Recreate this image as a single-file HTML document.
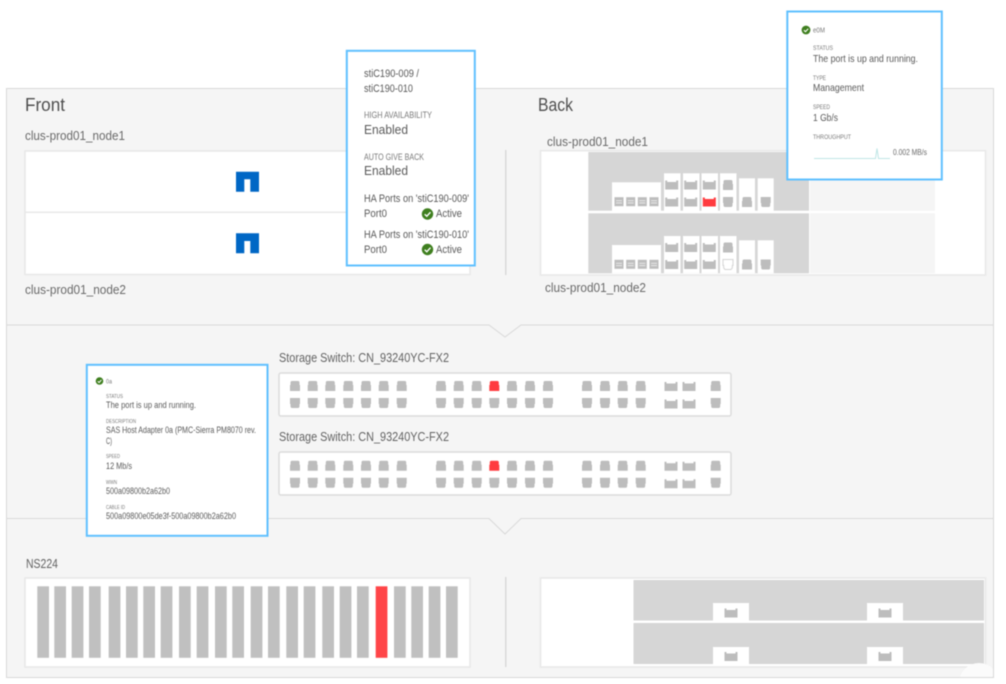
<!DOCTYPE html>
<html><head><meta charset="utf-8"><style>
html,body{margin:0;padding:0;background:#fff;width:1006px;height:684px;overflow:hidden}
svg{display:block;filter:blur(.5px)}
text{font-family:"Liberation Sans",sans-serif;fill:#5a5a5a}
</style></head><body>
<svg width="1006" height="684" viewBox="0 0 1006 684" xmlns="http://www.w3.org/2000/svg">
<defs>
<path id="u" fill="#bdbdbd" d="M-3-5H3Q4.500-5 4.500-3.300V-1H5V5H-5V-1H-4.500V-3.300Q-4.500-5-3-5Z"/>
<path id="d" fill="#bdbdbd" d="M-5-5H5V1H4.500V3Q4.500 5 3 5H-3Q-4.500 5-4.500 3V1H-5Z"/>
<path id="ur" fill="#ff3b3f" d="M-3-5H3Q4.500-5 4.500-3.300V-1H5V5H-5V-1H-4.500V-3.300Q-4.500-5-3-5Z"/>
<path id="w" fill="#bdbdbd" d="M-6.500-4.500H-4.500V-3H4.500V-4.500H6.500V4.500H-6.500Z"/>
<path id="wr" fill="#ff3b3f" d="M-6.500-4.500H-4.500V-3H4.500V-4.500H6.500V4.500H-6.500Z"/>
<g id="sq"><rect x="-4.500" y="-4.500" width="9" height="9" fill="#bdbdbd"/><rect x="-3" y="-1.500" width="6" height="1" fill="#e8e8e8"/><rect x="-3" y=".8" width="6" height="1" fill="#e8e8e8"/></g>
<g id="sw">
<use href="#u" x="295" y="0"/><use href="#u" x="312.700" y="0"/><use href="#u" x="330.300" y="0"/><use href="#u" x="348.300" y="0"/><use href="#u" x="366" y="0"/><use href="#u" x="383.700" y="0"/><use href="#u" x="401.700" y="0"/>
<use href="#u" x="441" y="0"/><use href="#u" x="458.700" y="0"/><use href="#u" x="476.700" y="0"/><use href="#ur" x="494.300" y="0"/><use href="#u" x="512" y="0"/><use href="#u" x="530" y="0"/><use href="#u" x="548" y="0"/>
<use href="#u" x="587" y="0"/><use href="#u" x="605" y="0"/><use href="#u" x="622.700" y="0"/><use href="#u" x="640.700" y="0"/><use href="#w" x="671" y="0.500"/><use href="#w" x="689" y="0.500"/><use href="#u" x="715.700" y="0"/>
<use href="#d" x="295" y="17"/><use href="#d" x="312.700" y="17"/><use href="#d" x="330.300" y="17"/><use href="#d" x="348.300" y="17"/><use href="#d" x="366" y="17"/><use href="#d" x="383.700" y="17"/><use href="#d" x="401.700" y="17"/>
<use href="#d" x="441" y="17"/><use href="#d" x="458.700" y="17"/><use href="#d" x="476.700" y="17"/><use href="#d" x="494.300" y="17"/><use href="#d" x="512" y="17"/><use href="#d" x="530" y="17"/><use href="#d" x="548" y="17"/>
<use href="#d" x="587" y="17"/><use href="#d" x="605" y="17"/><use href="#d" x="622.700" y="17"/><use href="#d" x="640.700" y="17"/><use href="#w" x="671" y="18"/><use href="#w" x="689" y="18"/><use href="#d" x="715.700" y="17"/>
</g>
<clipPath id="pc"><rect x="6" y="88" width="987" height="589"/></clipPath>
</defs>

<!-- panel -->
<rect x="6.500" y="88.500" width="987" height="589" fill="#f5f5f5" stroke="#d9d9d9"/>
<polyline points="6,325 489,325 505,337 521,325 993,325" fill="none" stroke="#d9d9d9" stroke-width="1"/>
<polyline points="6,518.500 489,518.500 505,534 521,518.500 993,518.500" fill="none" stroke="#d9d9d9" stroke-width="1"/>

<!-- Front/Back headings -->
<text x="25" y="111" font-size="18.500" textLength="40" lengthAdjust="spacingAndGlyphs" style="fill:#4f4f4f">Front</text>
<text x="538" y="111" font-size="18.500" textLength="35" lengthAdjust="spacingAndGlyphs" style="fill:#4f4f4f">Back</text>
<text x="25" y="140" font-size="13" textLength="100" lengthAdjust="spacingAndGlyphs" style="fill:#6a6a6a">clus-prod01_node1</text>
<text x="25" y="294" font-size="13" textLength="101" lengthAdjust="spacingAndGlyphs" style="fill:#6a6a6a">clus-prod01_node2</text>
<text x="547" y="146" font-size="13" textLength="101" lengthAdjust="spacingAndGlyphs" style="fill:#6a6a6a">clus-prod01_node1</text>
<text x="545" y="292" font-size="13" textLength="101" lengthAdjust="spacingAndGlyphs" style="fill:#6a6a6a">clus-prod01_node2</text>

<!-- Front box -->
<rect x="25" y="151" width="445" height="123.500" fill="#fff" stroke="#e8e8e8" stroke-width="1.500"/>
<rect x="25" y="211.500" width="445" height="1.500" fill="#e8e8e8"/>
<path fill="#0067c5" d="M236 171.700H259V191.700H250.300V179.300H244.300V191.700H236Z"/>
<path fill="#0067c5" d="M236 233.300H259V253.300H250.300V241H244.300V253.300H236Z"/>

<rect x="505" y="150" width="1.500" height="125" fill="#d9d9d9"/>

<!-- Back box -->
<rect x="540.500" y="150.700" width="445" height="124.300" fill="#fff" stroke="#e8e8e8" stroke-width="1.500"/>
<rect x="588.300" y="152" width="220.700" height="58.700" fill="#d6d6d6"/>
<rect x="588.300" y="213.300" width="220.700" height="60" fill="#d6d6d6"/>
<rect x="810" y="152" width="125" height="58.700" fill="#f5f5f5"/>
<rect x="810" y="213.300" width="125" height="60" fill="#f5f5f5"/>
<g fill="#fff">
<rect x="612" y="182.300" width="49" height="28.700"/>
<rect x="664" y="173.300" width="16.500" height="37.700"/>
<rect x="683" y="173.300" width="16.500" height="37.700"/>
<rect x="701.500" y="173.300" width="16.500" height="37.700"/>
<rect x="720" y="173.300" width="16.500" height="37.700"/>
<rect x="739" y="178.300" width="16" height="32.700"/>
<rect x="757.700" y="178.300" width="16" height="32.700"/>
<rect x="612" y="245" width="49" height="28.300"/>
<rect x="664" y="236" width="16.500" height="37.300"/>
<rect x="683" y="236" width="16.500" height="37.300"/>
<rect x="701.500" y="236" width="16.500" height="37.300"/>
<rect x="720" y="236" width="16.500" height="37.300"/>
<rect x="739" y="240.300" width="16" height="33"/>
<rect x="757.700" y="240.300" width="16" height="33"/>
</g>
<use href="#sq" x="619" y="201.700"/><use href="#sq" x="630.700" y="201.700"/><use href="#sq" x="642.300" y="201.700"/><use href="#sq" x="654" y="201.700"/>
<use href="#w" x="671.700" y="185"/><use href="#w" x="690.700" y="185"/><use href="#w" x="709.300" y="185"/><use href="#u" x="728" y="185"/>
<use href="#w" x="671.700" y="202"/><use href="#w" x="690.700" y="202"/><use href="#wr" x="709.300" y="202"/><use href="#d" x="728" y="202"/>
<use href="#u" x="747" y="202"/><use href="#d" x="765.700" y="202"/>
<use href="#sq" x="619" y="264.300"/><use href="#sq" x="630.700" y="264.300"/><use href="#sq" x="642.300" y="264.300"/><use href="#sq" x="654" y="264.300"/>
<use href="#w" x="671.700" y="247.500"/><use href="#w" x="690.700" y="247.500"/><use href="#w" x="709.300" y="247.500"/><use href="#u" x="728" y="247.500"/>
<use href="#w" x="671.700" y="264.500"/><use href="#w" x="690.700" y="264.500"/><use href="#w" x="709.300" y="264.500"/>
<path fill="#fff" stroke="#d4d4d4" d="M723 259.500H733V265.500H732.300V268L731 269.500H725L723.700 268V265.500H723Z"/>
<use href="#u" x="747" y="264.500"/><use href="#d" x="765.700" y="264.500"/>

<!-- Switches -->
<text x="279" y="362" font-size="13" textLength="170" lengthAdjust="spacingAndGlyphs" style="fill:#636363">Storage Switch: CN_93240YC-FX2</text>
<rect x="279" y="373" width="452" height="43" rx="2" fill="#fff" stroke="#dcdcdc" stroke-width="1.500"/>
<use href="#sw" y="386"/>
<text x="279" y="441" font-size="13" textLength="170" lengthAdjust="spacingAndGlyphs" style="fill:#636363">Storage Switch: CN_93240YC-FX2</text>
<rect x="279" y="452" width="452" height="43" rx="2" fill="#fff" stroke="#dcdcdc" stroke-width="1.500"/>
<use href="#sw" y="465.700"/>

<!-- NS224 -->
<text x="26" y="568" font-size="12.500" textLength="32" lengthAdjust="spacingAndGlyphs" style="fill:#636363">NS224</text>
<rect x="25" y="578" width="445" height="89" fill="#fff" stroke="#e8e8e8" stroke-width="1.500"/>
<g fill="#c0c0c0">
<rect x="37.300" y="586.300" width="11.700" height="71.500"/><rect x="54.300" y="586.300" width="11.700" height="71.500"/><rect x="71.700" y="586.300" width="11.700" height="71.500"/><rect x="89" y="586.300" width="11.700" height="71.500"/>
<rect x="108.700" y="586.300" width="11.700" height="71.500"/><rect x="126" y="586.300" width="11.700" height="71.500"/><rect x="143.300" y="586.300" width="11.700" height="71.500"/><rect x="160.700" y="586.300" width="11.700" height="71.500"/>
<rect x="179" y="586.300" width="11.700" height="71.500"/><rect x="196.700" y="586.300" width="11.700" height="71.500"/><rect x="215" y="586.300" width="11.700" height="71.500"/><rect x="232.300" y="586.300" width="11.700" height="71.500"/>
<rect x="250.700" y="586.300" width="11.700" height="71.500"/><rect x="268" y="586.300" width="11.700" height="71.500"/><rect x="286.300" y="586.300" width="11.700" height="71.500"/><rect x="303.700" y="586.300" width="11.700" height="71.500"/>
<rect x="322.300" y="586.300" width="11.700" height="71.500"/><rect x="339.700" y="586.300" width="11.700" height="71.500"/><rect x="357" y="586.300" width="11.700" height="71.500"/>
<rect x="375.700" y="586.300" width="11.700" height="71.500" fill="#ff4548"/>
<rect x="394" y="586.300" width="11.700" height="71.500"/><rect x="411.300" y="586.300" width="11.700" height="71.500"/><rect x="428.700" y="586.300" width="11.700" height="71.500"/><rect x="446" y="586.300" width="11.700" height="71.500"/>
</g>
<rect x="505" y="577" width="1.500" height="90" fill="#d9d9d9"/>
<rect x="540.500" y="578" width="445" height="89" fill="#fff" stroke="#e8e8e8" stroke-width="1.500"/>
<rect x="633.500" y="580" width="350.500" height="40.500" fill="#d6d6d6"/>
<rect x="633.500" y="623" width="350.500" height="41" fill="#d6d6d6"/>
<g fill="#fff">
<rect x="713" y="603" width="36" height="18"/><rect x="867" y="603" width="36" height="18"/>
<rect x="713" y="647" width="36" height="18"/><rect x="867" y="647" width="36" height="18"/>
</g>
<use href="#w" x="731" y="613"/><use href="#w" x="885" y="613"/><use href="#w" x="731" y="656.500"/><use href="#w" x="885" y="656.500"/>
<circle cx="979" cy="683" r="20" fill="#fbfbfb" clip-path="url(#pc)"/>

<!-- Tooltip 1 -->
<rect x="346.800" y="50.800" width="128" height="214.700" fill="#fff" stroke="#5fc0ff" stroke-width="2"/>
<text x="364" y="77" font-size="11" textLength="55" lengthAdjust="spacingAndGlyphs">stiC190-009 /</text>
<text x="364" y="92" font-size="11" textLength="49" lengthAdjust="spacingAndGlyphs">stiC190-010</text>
<text x="364" y="118" font-size="9" textLength="68" lengthAdjust="spacingAndGlyphs" style="fill:#7a7a7a">HIGH AVAILABILITY</text>
<text x="364" y="134" font-size="13" textLength="44" lengthAdjust="spacingAndGlyphs">Enabled</text>
<text x="364" y="160" font-size="9" textLength="60" lengthAdjust="spacingAndGlyphs" style="fill:#7a7a7a">AUTO GIVE BACK</text>
<text x="364" y="175" font-size="13" textLength="44" lengthAdjust="spacingAndGlyphs">Enabled</text>
<text x="364" y="202" font-size="11" textLength="105" lengthAdjust="spacingAndGlyphs">HA Ports on 'stiC190-009'</text>
<text x="364" y="217" font-size="11" textLength="23" lengthAdjust="spacingAndGlyphs">Port0</text>
<circle cx="427.500" cy="214" r="5.700" fill="#3f7f1f"/><path d="M424.700 214.200L426.800 216.200L430.500 212.200" fill="none" stroke="#fff" stroke-width="1.400"/>
<text x="436" y="217" font-size="11" textLength="26" lengthAdjust="spacingAndGlyphs">Active</text>
<text x="364" y="238" font-size="11" textLength="105" lengthAdjust="spacingAndGlyphs">HA Ports on 'stiC190-010'</text>
<text x="364" y="253" font-size="11" textLength="23" lengthAdjust="spacingAndGlyphs">Port0</text>
<circle cx="427.500" cy="249.500" r="5.700" fill="#3f7f1f"/><path d="M424.700 249.700L426.800 251.700L430.500 247.700" fill="none" stroke="#fff" stroke-width="1.400"/>
<text x="436" y="253" font-size="11" textLength="26" lengthAdjust="spacingAndGlyphs">Active</text>

<!-- Tooltip 2 -->
<rect x="787.300" y="11.500" width="154.500" height="168" fill="#fff" stroke="#5fc0ff" stroke-width="2"/>
<circle cx="806" cy="30" r="4.400" fill="#3f7f1f"/><path d="M803.900 30.200L805.500 31.700L808.200 28.700" fill="none" stroke="#fff" stroke-width="1.100"/>
<text x="813" y="32.500" font-size="7" textLength="12" lengthAdjust="spacingAndGlyphs" style="fill:#7a7a7a">e0M</text>
<text x="813" y="50" font-size="6.500" textLength="20" lengthAdjust="spacingAndGlyphs" style="fill:#7a7a7a">STATUS</text>
<text x="813" y="62" font-size="10.500" textLength="105" lengthAdjust="spacingAndGlyphs">The port is up and running.</text>
<text x="813" y="80" font-size="6.500" textLength="13" lengthAdjust="spacingAndGlyphs" style="fill:#7a7a7a">TYPE</text>
<text x="813" y="91" font-size="10.500" textLength="51" lengthAdjust="spacingAndGlyphs">Management</text>
<text x="813" y="109" font-size="6.500" textLength="17" lengthAdjust="spacingAndGlyphs" style="fill:#7a7a7a">SPEED</text>
<text x="813" y="121" font-size="10.500" textLength="25" lengthAdjust="spacingAndGlyphs">1 Gb/s</text>
<text x="813" y="139" font-size="6.500" textLength="38" lengthAdjust="spacingAndGlyphs" style="fill:#7a7a7a">THROUGHPUT</text>
<path d="M814 158.500H875.500L877 148.500L878.500 158.500H890" fill="none" stroke="#bfe6e6" stroke-width="1"/>
<text x="893" y="155" font-size="8" textLength="34" lengthAdjust="spacingAndGlyphs" style="fill:#6a6a6a">0.002 MB/s</text>

<!-- Tooltip 3 -->
<rect x="86.800" y="364.800" width="180.700" height="171" fill="#fff" stroke="#5fc0ff" stroke-width="2"/>
<circle cx="99.500" cy="381" r="3.800" fill="#3f7f1f"/><path d="M97.700 381.200L99.100 382.500L101.400 379.900" fill="none" stroke="#fff" stroke-width="1"/>
<text x="106" y="383.500" font-size="6.500" textLength="6" lengthAdjust="spacingAndGlyphs" style="fill:#7a7a7a">0a</text>
<text x="106" y="398" font-size="5.500" textLength="17" lengthAdjust="spacingAndGlyphs" style="fill:#7a7a7a">STATUS</text>
<text x="106" y="408" font-size="9" textLength="90" lengthAdjust="spacingAndGlyphs">The port is up and running.</text>
<text x="106" y="423" font-size="5.500" textLength="30" lengthAdjust="spacingAndGlyphs" style="fill:#7a7a7a">DESCRIPTION</text>
<text x="106" y="433" font-size="9" textLength="150" lengthAdjust="spacingAndGlyphs">SAS Host Adapter 0a (PMC-Sierra PM8070 rev.</text>
<text x="106" y="444" font-size="9" textLength="6" lengthAdjust="spacingAndGlyphs">C)</text>
<text x="106" y="458" font-size="5.500" textLength="14" lengthAdjust="spacingAndGlyphs" style="fill:#7a7a7a">SPEED</text>
<text x="106" y="469" font-size="9" textLength="26" lengthAdjust="spacingAndGlyphs">12 Mb/s</text>
<text x="106" y="484" font-size="5.500" textLength="11" lengthAdjust="spacingAndGlyphs" style="fill:#7a7a7a">WWN</text>
<text x="106" y="494" font-size="9" textLength="64" lengthAdjust="spacingAndGlyphs">500a09800b2a62b0</text>
<text x="106" y="509" font-size="5.500" textLength="19" lengthAdjust="spacingAndGlyphs" style="fill:#7a7a7a">CABLE ID</text>
<text x="106" y="519" font-size="9" textLength="130" lengthAdjust="spacingAndGlyphs">500a09800e05de3f-500a09800b2a62b0</text>
</svg>
</body></html>
